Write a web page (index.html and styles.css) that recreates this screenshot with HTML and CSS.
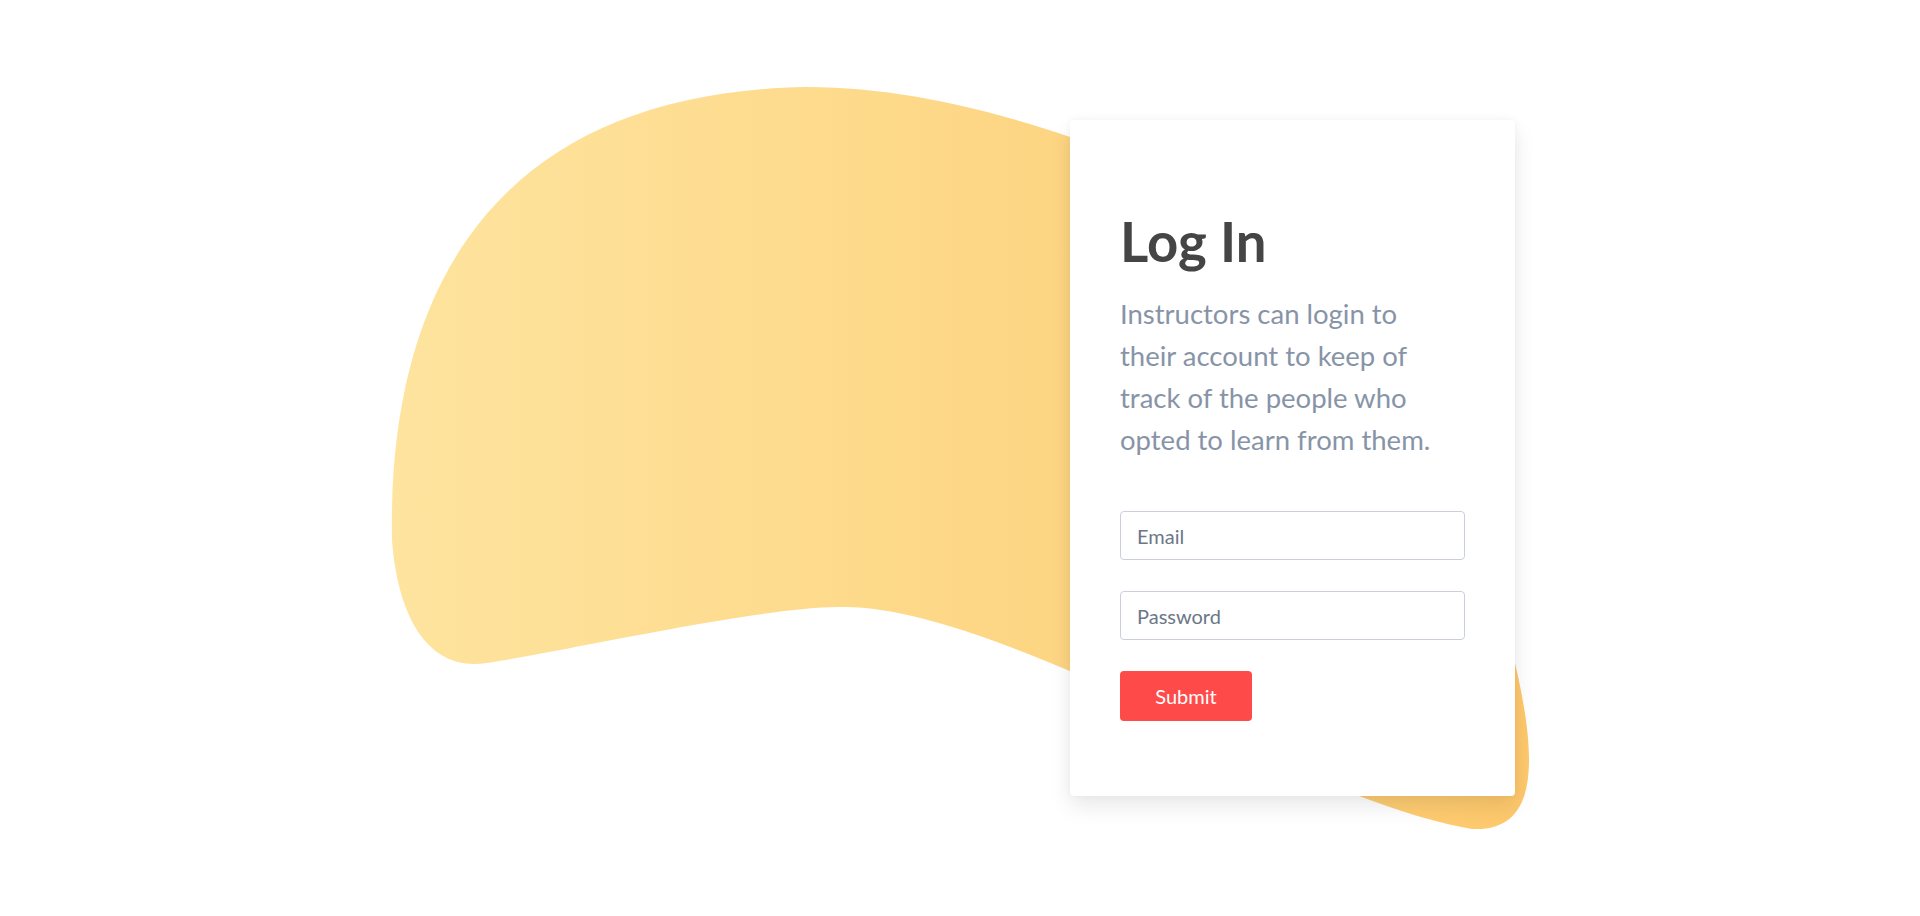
FILE: index.html
```html
<!DOCTYPE html>
<html lang="en">
<head>
<meta charset="utf-8">
<title>Log In</title>
<link rel="stylesheet" href="styles.css">
</head>
<body>
<main class="page">
  <div class="scene">
    <svg class="blob" viewBox="380 0 1160 916" width="1160" height="916" aria-hidden="true">
      <defs>
        <linearGradient id="blobGrad" gradientUnits="userSpaceOnUse" x1="385" y1="0" x2="1535" y2="0">
          <stop offset="0" stop-color="#fee49f"/>
          <stop offset="0.6" stop-color="#fdd582"/>
          <stop offset="1" stop-color="#fec86b"/>
        </linearGradient>
      </defs>
      <path fill="url(#blobGrad)" d="M 806 87 C 900 87 990 110 1070 137 C 1290 210 1495 540 1515 663 C 1540 770 1535 832 1472 829 C 1300 800 1000 606 843 607 C 770 605 570 650 487 663 C 430 672 398 620 392 540 C 387 260 520 92 806 87 Z"/>
    </svg>
    <section class="card">
      <h1 class="title">Log In</h1>
      <p class="lead">Instructors can login to their account to keep of track of the people who opted to learn from them.</p>
      <form class="form">
        <input class="field" type="email" placeholder="Email">
        <input class="field" type="password" placeholder="Password">
        <button class="submit" type="button">Submit</button>
      </form>
    </section>
  </div>
</main>
</body>
</html>
```

FILE: styles.css
```css
* { box-sizing: border-box; }

html, body {
  margin: 0;
  padding: 0;
  background: #ffffff;
  font-family: Lato, "Open Sans", "Liberation Sans", sans-serif;
}

.page {
  display: flex;
  justify-content: center;
  min-height: 916px;
}

.scene {
  position: relative;
  width: 1160px;
  height: 916px;
  padding-top: 120px;
  padding-right: 25px;
  display: flex;
  justify-content: flex-end;
  align-items: flex-start;
}

.blob {
  position: absolute;
  left: 0;
  top: 0;
  display: block;
}

.card {
  position: relative;
  width: 445px;
  background: #ffffff;
  border-radius: 4px;
  padding: 89px 50px 75px 50px;
  box-shadow: 0 10px 22px rgba(0, 0, 0, 0.09), 0 0 8px rgba(0, 0, 0, 0.04);
}

.title {
  margin: 0;
  font-size: 54.5px;
  line-height: 1.2;
  font-weight: 700;
  color: #454545;
}

.lead {
  max-width: 320px;
  margin: 19px 0 0 0;
  font-size: 27.5px;
  line-height: 42px;
  font-weight: 400;
  color: #8794a7;
}

.form {
  margin-top: 50px;
  display: flex;
  flex-direction: column;
  align-items: flex-start;
  gap: 31px;
}

.field {
  width: 100%;
  height: 49px;
  border: 1px solid #c9d0da;
  border-radius: 4px;
  padding: 0 16px;
  font-family: Lato, "Open Sans", "Liberation Sans", sans-serif;
  font-size: 20px;
  color: #4a5260;
  background: #ffffff;
  outline: none;
}

.field::placeholder {
  color: #6c7787;
  opacity: 1;
}

.submit {
  height: 50px;
  width: 132px;
  border: none;
  border-radius: 4px;
  background: #ff4a4a;
  color: #ffffff;
  font-family: Lato, "Open Sans", "Liberation Sans", sans-serif;
  font-size: 20px;
  cursor: pointer;
}
```
